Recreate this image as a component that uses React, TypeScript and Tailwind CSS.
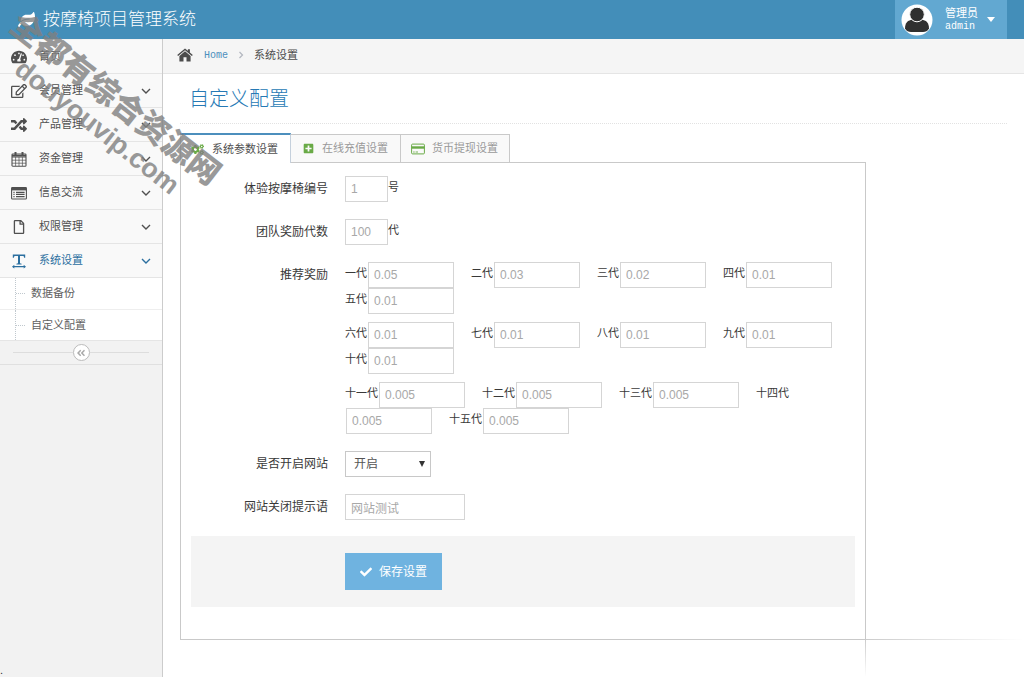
import React from 'react';
import {
  FaAngleDoubleLeft,
  FaCheck,
  FaCogs,
  FaLeaf,
  FaPlusSquare,
  FaRandom,
  FaRegEdit,
  FaRegFile,
  FaTachometerAlt,
} from 'react-icons/fa';

function CalendarIcon() {
  return (
    <svg viewBox="0 0 16 16" className="h-4 w-4" fill="none" stroke="currentColor">
      <rect x="1" y="3" width="14" height="12.2" rx="0.8" strokeWidth="1.1" />
      <path d="M1 4.3h14M1 5.9h14" strokeWidth="1.3" />
      <path d="M1 9.2h14M1 12.2h14M4.6 6v9M8 6v9M11.4 6v9" strokeWidth="0.7" />
      <path d="M4.5 1v3.6M11.5 1v3.6" strokeWidth="2" />
    </svg>
  );
}

function ListIcon() {
  return (
    <svg viewBox="0 0 16 16" className="h-4 w-4" fill="none" stroke="currentColor">
      <rect x="0.6" y="2.6" width="14.8" height="11.4" rx="0.8" strokeWidth="1.1" />
      <path d="M0.6 4h14.8" strokeWidth="2.8" />
      <path d="M2.4 7.4h1.2M2.4 9.4h1.2M2.4 11.6h1.2M5 7.4h8.6M5 9.4h8.6M5 11.6h8.6" strokeWidth="1.1" />
    </svg>
  );
}

function TextWidthIcon() {
  return (
    <svg viewBox="0 0 16 16" className="h-4 w-4" fill="currentColor">
      <path d="M1.8 1.5h12.4v3.3h-1L12.5 3H9v7.3l1.6.5v.8H5.4v-.8l1.6-.5V3H3.500l-.7 1.800h-1z" />
      <path d="M1 13.700l2.300-1.900v1.300h9.400v-1.300l2.300 1.900-2.300 1.900v-1.300H3.300v1.300z" />
    </svg>
  );
}

function HomeIcon() {
  return (
    <svg viewBox="0 0 16 14" className="h-4 w-4" fill="currentColor">
      <path d="M8 3.200l5.600 4.700v5.500H9.500V9.300h-3v4.100H2.400V7.900z" />
      <path d="M8 .4l2.900 2.400V1.300h2v3.200l2.900 2.500-.9 1L8 2.200 1.100 8l-.9-1z" />
    </svg>
  );
}

function CardIcon() {
  return (
    <svg viewBox="0 0 14 12" className="h-3 w-[14px] text-[#69aa46]" fill="none" stroke="currentColor">
      <rect x="0.6" y="1.100" width="12.8" height="9.800" rx="1" strokeWidth="1" />
      <path d="M0.6 4.500h12.800" strokeWidth="2.400" />
      <path d="M2.200 9h1.500M4.600 9h2.400" strokeWidth="0.900" />
    </svg>
  );
}

function ChevronDown() {
  return (
    <svg viewBox="0 0 10 8" className="h-2 w-[10px]" fill="none" stroke="currentColor" strokeWidth="1.4">
      <path d="M1 2l4 4 4-4" />
    </svg>
  );
}

function ChevronRight() {
  return (
    <svg viewBox="0 0 6 8" className="mx-[10px] h-2 w-[6px] text-[#b2b6bf]" fill="none" stroke="currentColor" strokeWidth="1.2">
      <path d="M1.500 1l3 3-3 3" />
    </svg>
  );
}

function UserAvatar() {
  return (
    <svg viewBox="0 0 32 32" className="h-8 w-8" aria-hidden="true">
      <circle cx="16" cy="16" r="15.5" fill="#fff" />
      <path d="M4 24.500c0-6 3-8.500 7.500-8.500h9c4.500 0 7.500 2.500 7.500 8.500-1.500 2.600-3.500 3.500-6 3.500H10c-2.500 0-4.500-.9-6-3.500z" fill="#303030" />
      <circle cx="16" cy="10.500" r="7.300" fill="#303030" stroke="#fff" strokeWidth="1" />
    </svg>
  );
}

const menu = [
  { text: '首页', icon: <FaTachometerAlt />, open: false, arrow: false },
  { text: '会员管理', icon: <FaRegEdit />, open: false, arrow: true },
  { text: '产品管理', icon: <FaRandom />, open: false, arrow: true },
  { text: '资金管理', icon: <CalendarIcon />, open: false, arrow: true },
  { text: '信息交流', icon: <ListIcon />, open: false, arrow: true },
  { text: '权限管理', icon: <FaRegFile className="h-[14px] w-[14px]" />, open: false, arrow: true },
  { text: '系统设置', icon: <TextWidthIcon />, open: true, arrow: true },
];

const rewards = [
  [['一代', '0.05'], ['二代', '0.03'], ['三代', '0.02'], ['四代', '0.01'], ['五代', '0.01']],
  [['六代', '0.01'], ['七代', '0.01'], ['八代', '0.01'], ['九代', '0.01'], ['十代', '0.01']],
  [['十一代', '0.005'], ['十二代', '0.005'], ['十三代', '0.005'], ['十四代', '0.005'], ['十五代', '0.005']],
];

const field = 'h-[26px] border border-[#d5d5d5] bg-white px-[5px] text-xs text-[#a8a8a8] outline-none';

function Header() {
  return (
    <header className="flex h-[39px] items-stretch justify-between bg-[#438eb9] pr-[17px] text-white">
      <a href="#" className="flex items-center gap-2 pl-[18px] text-[17px] font-light">
        <FaLeaf className="h-[17px] w-[17px]" />
        按摩椅项目管理系统
      </a>
      <button className="flex w-28 items-center bg-[#62a8d1] pl-[6px] text-left">
        <UserAvatar />
        <span className="ml-3 w-10 text-[11px] leading-[13px]">
          <span className="block">管理员</span>
          <span className="block font-['Liberation_Mono',monospace] text-[10px]">admin</span>
        </span>
        <svg viewBox="0 0 8 5" className="ml-[2px] h-[5px] w-2" fill="currentColor">
          <path d="M0 0h8L4 5z" />
        </svg>
      </button>
    </header>
  );
}

function Sidebar() {
  return (
    <aside className="flex w-[163px] shrink-0 flex-col border-r border-[#ccc] bg-[#f2f2f2] pt-px text-[11px]">
      <nav>
        {menu.map((m) => (
          <a
            key={m.text}
            href="#"
            className={
              'flex h-[34px] items-center border-b border-[#e5e5e5] bg-[#f9f9f9] pl-[11px] pr-[11px] ' +
              (m.open ? 'text-[#2b6f9f]' : 'text-[#505050]')
            }
          >
            <span className="flex w-7 items-center text-base">
              <span className="flex w-4 justify-center">{m.icon}</span>
            </span>
            <span className="flex-1">{m.text}</span>
            {m.arrow && <ChevronDown />}
          </a>
        ))}
        <div className="border-b border-[#e5e5e5] bg-white text-[#616161]">
          {['数据备份', '自定义配置'].map((t) => (
            <a key={t} href="#" className="flex h-8 items-center border-b border-[#eee] pl-[15px] last:h-[30px] last:border-b-0">
              <span className="flex h-full w-4 items-center border-l border-dotted border-[#c0c8ce]">
                <span className="w-[9px] border-t border-dotted border-[#c0c8ce]" />
              </span>
              {t}
            </a>
          ))}
        </div>
      </nav>
      <div className="flex h-6 items-center border-b border-[#e0e0e0] px-[13px]">
        <span className="h-px flex-1 bg-[#ddd]" />
        <button aria-label="收起菜单" className="flex h-[17px] w-[17px] items-center justify-center rounded-full border border-[#bbb] bg-white text-[#aaa]">
          <FaAngleDoubleLeft className="h-[10px] w-[10px]" />
        </button>
        <span className="h-px flex-1 bg-[#ddd]" />
      </div>
      <span className="mt-auto leading-[14px] text-[#333]">.</span>
    </aside>
  );
}

function Tabs() {
  return (
    <div role="tablist" className="relative -mb-px flex h-[30px] items-stretch text-[11px]">
      <button role="tab" aria-selected="true" className="flex w-[111px] items-center gap-2 border-x border-t-2 border-x-[#c5d0dc] border-t-[#4c8fbd] bg-white pl-[10px] text-[#4f4f4f]">
        <FaCogs className="h-[13px] w-[13px] text-[#69aa46]" />
        系统参数设置
      </button>
      <button role="tab" aria-selected="false" className="mt-px flex w-[110px] items-center gap-2 border border-l-0 border-[#c9c9c9] bg-[#f9f9f9] pl-3 text-[#999]">
        <FaPlusSquare className="h-[11px] w-[11px] text-[#69aa46]" />
        在线充值设置
      </button>
      <button role="tab" aria-selected="false" className="mt-px flex w-[109px] items-center gap-[7px] border border-l-0 border-[#c9c9c9] bg-[#f9f9f9] pl-[10px] text-[#999]">
        <CardIcon />
        货币提现设置
      </button>
    </div>
  );
}

function Row({ label, id, children }: { label: string; id: string; children: React.ReactNode }) {
  return (
    <div className="flex gap-[17px]">
      <label htmlFor={id} className="w-[137px] shrink-0 text-right text-xs leading-[26px]">
        {label}
      </label>
      <div className="min-w-0 flex-1 text-[11px] leading-[22px]">{children}</div>
    </div>
  );
}

function SettingsForm() {
  return (
    <form className="w-full max-w-[686px] border border-[#c9c9c9] bg-white px-[10px] pb-8 pt-[13px] text-[#393939]">
      <div className="flex flex-col gap-[17px]">
        <Row label="体验按摩椅编号" id="chair">
          <input id="chair" defaultValue="1" className={field + ' w-[43px] align-top'} />号
        </Row>
        <Row label="团队奖励代数" id="levels">
          <input id="levels" defaultValue="100" className={field + ' w-[43px] align-top'} />代
        </Row>
        <Row label="推荐奖励" id="reward-一代">
          <div className="flex flex-col gap-2">
            {rewards.map((group) => (
              <div key={group[0][0]}>
                {group.map(([name, value]) => (
                  <React.Fragment key={name}>
                    <label htmlFor={'reward-' + name} className="whitespace-nowrap">{name}</label>
                    <input id={'reward-' + name} defaultValue={value} className={field + ' ml-px mr-[17px] w-[86px] align-top'} />
                  </React.Fragment>
                ))}
              </div>
            ))}
          </div>
        </Row>
        <Row label="是否开启网站" id="enabled">
          <div className="relative w-[86px]">
            <select id="enabled" className="block h-[26px] w-full appearance-none border border-[#c8c8c8] bg-white pl-2 text-xs text-[#555] outline-none">
              <option>开启</option>
              <option>关闭</option>
            </select>
            <svg viewBox="0 0 6 6" className="pointer-events-none absolute right-[6px] top-[10px] h-[6px] w-[6px]" fill="#333">
              <path d="M0 0h6L3 6z" />
            </svg>
          </div>
        </Row>
        <Row label="网站关闭提示语" id="notice">
          <input id="notice" defaultValue="网站测试" className={field + ' block w-[120px]'} />
        </Row>
      </div>
      <div className="mt-4 flex h-[71px] items-center bg-[#f4f4f4] pl-[154px]">
        <button type="button" className="flex h-[37px] w-[97px] items-center justify-center gap-[7px] bg-[#6fb3e0] text-xs text-white">
          <FaCheck className="h-3 w-3" />
          保存设置
        </button>
      </div>
    </form>
  );
}

export default function App() {
  return (
    <div className="relative flex min-h-screen flex-col overflow-hidden bg-white font-['Liberation_Sans','Noto_Sans_CJK_SC',sans-serif]">
      <Header />
      <div className="flex flex-1">
        <Sidebar />
        <main className="flex min-w-0 flex-1 flex-col">
          <div className="flex h-[35px] items-center border-b border-[#e5e5e5] bg-[#f5f5f5] pb-[2px] pl-[14px] text-[11px] text-[#4c4c4c]">
            <HomeIcon />
            <a href="#" className="ml-[11px] font-['Liberation_Mono',monospace] text-[10px] text-[#4c8fbd]">Home</a>
            <ChevronRight />
            <span>系统设置</span>
          </div>
          <div className="flex flex-1 flex-col pl-[17px]">
            <h1 className="mb-[9px] mr-[17px] flex h-[50px] items-center border-b border-dotted border-[#e2e2e2] pl-[9px] text-xl font-light text-[#2679b5]">
              自定义配置
            </h1>
            <Tabs />
            <div className="flex items-end">
              <SettingsForm />
              <span className="h-px flex-1 bg-linear-to-r from-[#ccc] to-white" />
            </div>
            <div className="flex flex-1 self-stretch">
              <span className="w-full max-w-[685px]" />
              <span className="w-px shrink-0 bg-linear-to-b from-[#ccc] to-white" />
              <span className="flex-1" />
            </div>
          </div>
        </main>
      </div>
      <div className="pointer-events-none absolute left-[25px] top-[7px] origin-top-left rotate-[38deg] whitespace-nowrap text-[#808080] opacity-80">
        <div className="text-[32px] font-black leading-[34px]">全都有综合资源网</div>
        <div className="pl-[31px] text-[27px] font-bold leading-[32px]">douyouvip.com</div>
      </div>
    </div>
  );
}
